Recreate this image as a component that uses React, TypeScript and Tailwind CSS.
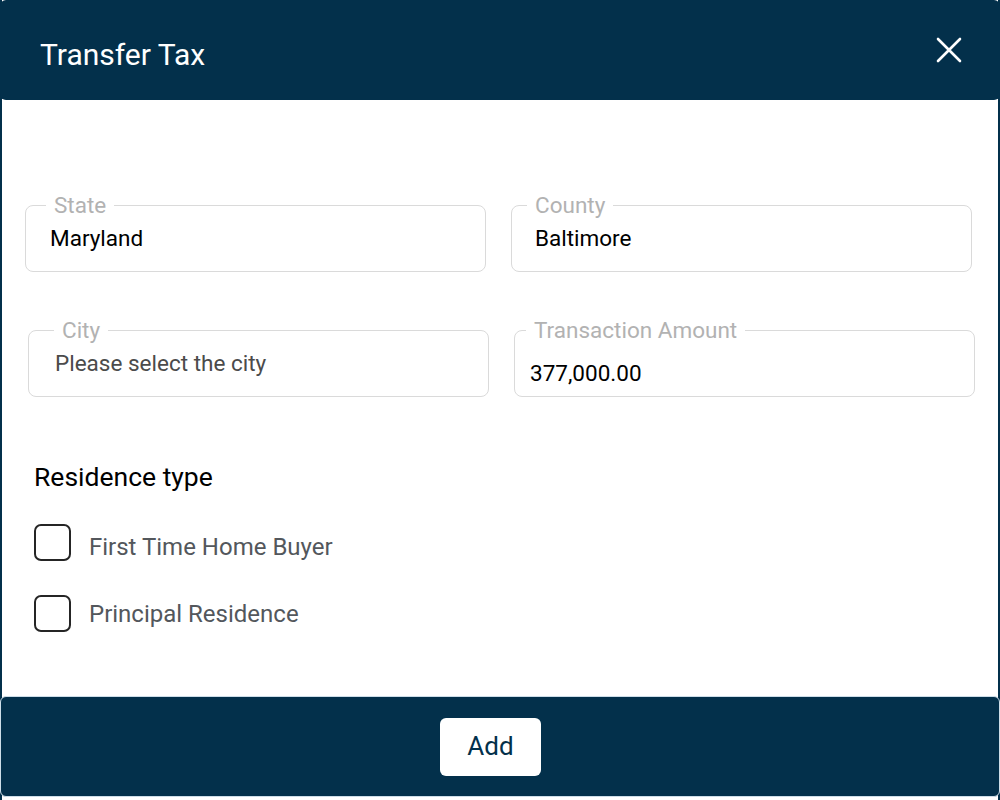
import React from 'react';

type FieldProps = {
  label: string;
  value: string;
  labelLeft: string;
  valueClass: string;
  muted?: boolean;
};

function Field({ label, value, labelLeft, valueClass, muted }: FieldProps) {
  return (
    <div className="relative h-[67px] w-[461px] rounded-lg border border-[#dadada] bg-white">
      <span className={`absolute -top-[13px] ${labelLeft} bg-white px-[8px] text-[22.5px] leading-[24px] text-[#b2b2b2]`}>
        {label}
      </span>
      <div className={`${valueClass} text-[22.5px] leading-[24px] ${muted ? 'text-[#4b4b4b]' : 'text-black'}`}>{value}</div>
    </div>
  );
}

function Checkbox({ label, textClass = '' }: { label: string; textClass?: string }) {
  return (
    <label className="flex items-center gap-[18px]">
      <span className="h-[37px] w-[37px] rounded-[7px] border-2 border-[#252525] bg-white" />
      <span className={`${textClass} text-[24px] leading-[28px] text-[#53575c]`}>{label}</span>
    </label>
  );
}

export default function App() {
  return (
    <div
      className="flex h-[800px] w-[1000px] flex-col border-x-2 border-[#03304b] bg-white"
      style={{ fontFamily: 'Roboto, "Noto Sans", sans-serif' }}
    >
      {/* Header */}
      <header className="-mx-[2px] flex h-[100px] items-center justify-between rounded-md bg-[#03304b] pl-[40px] pr-[38px]">
        <h1 className="pt-[9px] text-[30px] font-normal leading-none text-white">Transfer Tax</h1>
        <button className="text-white" aria-label="Close">
          <svg width="26" height="26" viewBox="0 0 26 26" fill="none" stroke="currentColor" strokeWidth="2.6" strokeLinecap="round">
            <path d="M2 2L24 24M24 2L2 24" />
          </svg>
        </button>
      </header>

      {/* Body */}
      <main className="flex-1 pt-[105px]">
        <div className="flex gap-[25px] pl-[23px]">
          <Field label="State" value="Maryland" labelLeft="left-[20px]" valueClass="pl-[24px] pt-[20px]" />
          <Field label="County" value="Baltimore" labelLeft="left-[15px]" valueClass="pl-[23px] pt-[20px]" />
        </div>
        <div className="mt-[58px] flex gap-[25px] pl-[26px]">
          <Field label="City" value="Please select the city" labelLeft="left-[25px]" valueClass="pl-[26px] pt-[20px]" muted />
          <Field label="Transaction Amount" value="377,000.00" labelLeft="left-[11px]" valueClass="pl-[15px] pt-[30px]" />
        </div>

        <div className="pl-[32px] pt-[65px]">
          <h2 className="text-[26.5px] leading-[30px] text-black">Residence type</h2>
          <div className="mt-[32px] flex flex-col gap-[34px]">
            <Checkbox label="First Time Home Buyer" textClass="pt-[8px]" />
            <Checkbox label="Principal Residence" />
          </div>
        </div>
      </main>

      {/* Footer */}
      <footer className="-mx-[2px] mb-[3px] flex h-[101px] items-center justify-center rounded-md border border-[#cddde8] bg-[#03304b] pr-[19px]">
        <button className="h-[58px] w-[101px] rounded-md bg-white text-[26px] text-[#03304b]">Add</button>
      </footer>
    </div>
  );
}
